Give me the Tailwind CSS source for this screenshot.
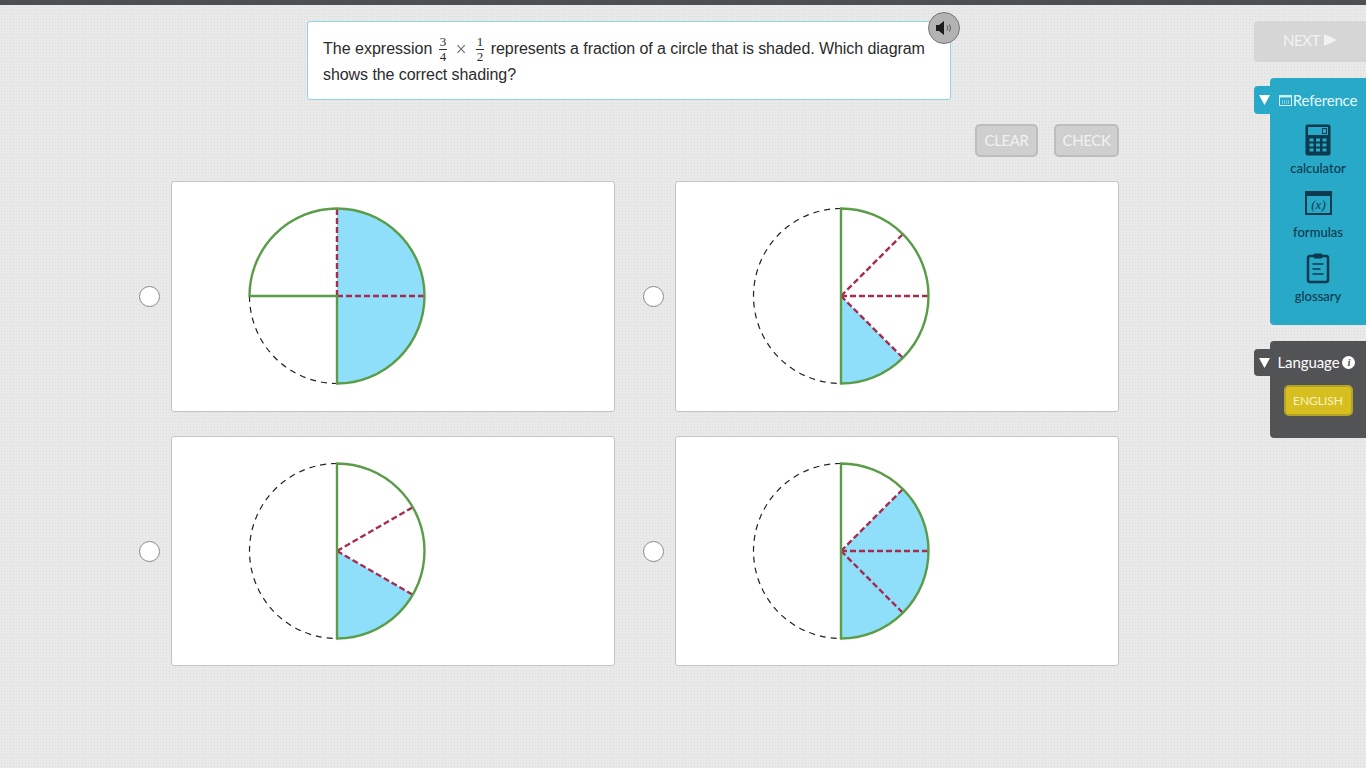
<!DOCTYPE html>
<html lang="en">
<head>
<meta charset="utf-8">
<title>Fractions item</title>
<script src="https://cdn.jsdelivr.net/npm/@tailwindcss/browser@4"></script>
</head>
<body class="m-0 overflow-hidden">
<div class="w-[1366px] h-[768px] overflow-hidden font-['Liberation_Sans',sans-serif] bg-[#e9e9e9] bg-[radial-gradient(#dcdcdc_0.6px,transparent_0.8px)] bg-[length:3px_3px]">
  <div class="h-[5px] bg-[#4c5050]"></div>
  <div class="flex">
    <!-- main column -->
    <main class="w-[1254px] pl-[139px] shrink-0">
      <div class="w-[980px]">
        <div class="relative ml-[168px] mt-[16px] w-[644px] h-[79px] bg-white border border-[#8ed6e0] rounded-[3px] px-[15px] pt-[14px] text-[16px] leading-[26px] text-[#2b2b2b]">
          <span>The expression</span>
          <span class="inline-flex flex-col items-center align-middle ml-[2px] font-['Liberation_Serif',serif] text-[13px] leading-[14px] -my-[6px]"><span class="px-[1px] border-b border-[#333]">3</span><span class="px-[1px]">4</span></span>
          <span class="font-['DejaVu_Sans',sans-serif] text-[15px] leading-[20px] mx-[3px] font-light text-[#444]">×</span>
          <span class="inline-flex flex-col items-center align-middle ml-[1px] mr-[2px] font-['Liberation_Serif',serif] text-[13px] leading-[14px] -my-[6px]"><span class="px-[1px] border-b border-[#333]">1</span><span class="px-[1px]">2</span></span>
          <span class="tracking-[-0.07px]">represents a fraction of a circle that is shaded. Which diagram shows the correct shading?</span>
          <div class="absolute left-[620px] -top-[10px] w-[32px] h-[32px] rounded-full bg-[#b3b3b3] border border-[#777] flex items-center justify-center">
            <svg width="20" height="16" viewBox="0 0 20 16"><path d="M2 5h3l5-4v14l-5-4H2z" fill="#1c1c1c"/><path d="M13 5.500q1.500 2.500 0 5M15.500 4.500q2 3.500 0 7" fill="none" stroke="#555" stroke-width="1"/></svg>
          </div>
        </div>
        <div class="flex justify-end gap-[16px] mt-[24px] font-['Lato',sans-serif] text-[15px] tracking-[-0.4px] text-[#f2f2f2]">
          <button class="w-[63px] h-[33px] bg-[#cfcfcf] border-2 border-[#bdbdbd] rounded-[5px] flex items-center justify-center">CLEAR</button>
          <button class="w-[65px] h-[33px] bg-[#cfcfcf] border-2 border-[#bdbdbd] rounded-[5px] flex items-center justify-center">CHECK</button>
        </div>
        <div class="grid grid-cols-[476px_444px] gap-x-[60px] gap-y-[24px] mt-[24px]">
          <!-- A -->
          <div class="flex items-center">
            <span class="w-[21px] h-[21px] rounded-full bg-white border border-[#8a8a8a] shrink-0"></span>
            <div class="ml-[11px] w-[444px] h-[231px] bg-white border border-[#c4c4c4] rounded-[3px] flex items-center pl-[65px] pb-[2px]">
              <svg width="200" height="200" viewBox="-100 -100 200 200">
                <path d="M0 -87.500A87.500 87.500 0 0 1 0 87.500Z" fill="#8fdffa"/>
                <path d="M-87.500 0A87.500 87.500 0 0 0 0 87.500" fill="none" stroke="#222" stroke-width="1.200" stroke-dasharray="6 5"/>
                <path d="M0 0V-87.500M0 0H87.500" stroke="#a82a4c" stroke-width="2.400" stroke-dasharray="6 3" fill="none"/>
                <path d="M0 87.500V0H-87.500A87.500 87.500 0 0 1 87.500 0A87.500 87.500 0 0 1 0 87.500Z" fill="none" stroke="#5a9c48" stroke-width="2.400"/>
              </svg>
            </div>
          </div>
          <!-- B -->
          <div class="flex items-center -ml-[32px]">
            <span class="w-[21px] h-[21px] rounded-full bg-white border border-[#8a8a8a] shrink-0"></span>
            <div class="ml-[11px] w-[444px] h-[231px] bg-white border border-[#c4c4c4] rounded-[3px] flex items-center pl-[65px] pb-[2px]">
              <svg width="200" height="200" viewBox="-100 -100 200 200">
                <path d="M0 0L61.900 61.900A87.500 87.500 0 0 1 0 87.500Z" fill="#8fdffa"/>
                <path d="M0 -87.500A87.500 87.500 0 0 0 0 87.500" fill="none" stroke="#222" stroke-width="1.200" stroke-dasharray="6 5"/>
                <path d="M0 0L61.900 -61.900M0 0H87.500M0 0L61.900 61.900" stroke="#a82a4c" stroke-width="2.400" stroke-dasharray="6 3" fill="none"/>
                <path d="M0 87.500V-87.500A87.500 87.500 0 0 1 0 87.500Z" fill="none" stroke="#5a9c48" stroke-width="2.400"/>
              </svg>
            </div>
          </div>
          <!-- C -->
          <div class="flex items-center">
            <span class="w-[21px] h-[21px] rounded-full bg-white border border-[#8a8a8a] shrink-0"></span>
            <div class="ml-[11px] w-[444px] h-[230px] bg-white border border-[#c4c4c4] rounded-[3px] flex items-center pl-[65px]">
              <svg width="200" height="200" viewBox="-100 -100 200 200">
                <path d="M0 0L75.800 43.750A87.500 87.500 0 0 1 0 87.500Z" fill="#8fdffa"/>
                <path d="M0 -87.500A87.500 87.500 0 0 0 0 87.500" fill="none" stroke="#222" stroke-width="1.200" stroke-dasharray="6 5"/>
                <path d="M0 0L75.800 -43.750M0 0L75.800 43.750" stroke="#a82a4c" stroke-width="2.400" stroke-dasharray="6 3" fill="none"/>
                <path d="M0 87.500V-87.500A87.500 87.500 0 0 1 0 87.500Z" fill="none" stroke="#5a9c48" stroke-width="2.400"/>
              </svg>
            </div>
          </div>
          <!-- D -->
          <div class="flex items-center -ml-[32px]">
            <span class="w-[21px] h-[21px] rounded-full bg-white border border-[#8a8a8a] shrink-0"></span>
            <div class="ml-[11px] w-[444px] h-[230px] bg-white border border-[#c4c4c4] rounded-[3px] flex items-center pl-[65px]">
              <svg width="200" height="200" viewBox="-100 -100 200 200">
                <path d="M0 0L61.900 -61.900A87.500 87.500 0 0 1 0 87.500Z" fill="#8fdffa"/>
                <path d="M0 -87.500A87.500 87.500 0 0 0 0 87.500" fill="none" stroke="#222" stroke-width="1.200" stroke-dasharray="6 5"/>
                <path d="M0 0L61.900 -61.900M0 0H87.500M0 0L61.900 61.900" stroke="#a82a4c" stroke-width="2.400" stroke-dasharray="6 3" fill="none"/>
                <path d="M0 87.500V-87.500A87.500 87.500 0 0 1 0 87.500Z" fill="none" stroke="#5a9c48" stroke-width="2.400"/>
              </svg>
            </div>
          </div>
        </div>
      </div>
    </main>
    <!-- sidebar -->
    <aside class="w-[112px] shrink-0 pt-[16px] font-['Lato',sans-serif]">
      <button class="w-[112px] h-[41px] bg-[#d6d6d6] rounded-l-[4px] flex items-center justify-center gap-[4px] text-[15px] tracking-[-0.4px] text-[#f2f2f2] pb-[3px]">NEXT <svg width="13" height="12" viewBox="0 0 13 12"><path d="M0 0L13 6L0 12Z" fill="#f2f2f2"/></svg></button>
      <div class="flex mt-[16px]">
        <div class="w-[16px] h-[28px] mt-[8px] bg-[#27a9c7] rounded-l-[4px] flex items-center justify-center pl-[5px] shrink-0">
          <svg width="11" height="10" viewBox="0 0 11 10" class="shrink-0"><path d="M0 0H11L5.500 10Z" fill="#fff"/></svg>
        </div>
        <div class="w-[96px] h-[247px] bg-[#27a9c7] rounded-l-[4px] flex flex-col items-center pt-[12px] text-[#0e3a4f] text-[13px] leading-[16px] font-medium">
          <div class="flex items-center text-[15px] leading-[20px] text-[#e6f7fb] gap-[1px] font-normal tracking-[-0.2px]">
            <svg width="13" height="11" viewBox="0 0 13 11"><rect x="0.500" y="0.500" width="12" height="10" fill="none" stroke="#cfeff6"/><rect x="0.500" y="0.500" width="12" height="2" fill="#cfeff6"/><path d="M3 6h7M3 8h7" stroke="#cfeff6" stroke-dasharray="1 1"/></svg>
            <span>Reference</span>
          </div>
          <svg class="mt-[14px] shrink-0" width="26" height="32" viewBox="0 0 26 32"><rect x="0.500" y="0.500" width="25" height="31" rx="2" fill="#0e3a4f"/><rect x="3" y="3" width="20" height="8" fill="#27a9c7"/><rect x="17.500" y="4.500" width="4" height="5" fill="none" stroke="#0e3a4f"/><g fill="#27a9c7"><rect x="4.500" y="14.500" width="4" height="3"/><rect x="11" y="14.500" width="4" height="3"/><rect x="17.500" y="14.500" width="4" height="3"/><rect x="4.500" y="19.500" width="4" height="3"/><rect x="11" y="19.500" width="4" height="3"/><rect x="17.500" y="19.500" width="4" height="3"/><rect x="4.500" y="24.500" width="4" height="3"/><rect x="11" y="24.500" width="4" height="3"/><rect x="17.500" y="24.500" width="4" height="3"/></g></svg>
          <span class="mt-[4px]">calculator</span>
          <svg class="mt-[15px] shrink-0" width="27" height="24" viewBox="0 0 27 24"><rect x="1" y="1" width="25" height="22" fill="none" stroke="#0e3a4f" stroke-width="2"/><rect x="1" y="1" width="25" height="4" fill="#0e3a4f"/><text x="13.500" y="18" text-anchor="middle" font-family="Liberation Serif" font-style="italic" font-size="13" fill="#0e3a4f">(x)</text></svg>
          <span class="mt-[9px]">formulas</span>
          <svg class="mt-[12px] shrink-0" width="24" height="32" viewBox="0 0 24 32"><rect x="2" y="4" width="20" height="26" rx="2" fill="none" stroke="#0e3a4f" stroke-width="2.500"/><rect x="7.500" y="1.500" width="9" height="5" rx="1.500" fill="#0e3a4f"/><path d="M6.500 12h11M6.500 17h8M6.500 22h11" stroke="#0e3a4f" stroke-width="1.500"/></svg>
          <span class="mt-[4px]">glossary</span>
        </div>
      </div>
      <div class="flex mt-[16px]">
        <div class="w-[16px] h-[27px] mt-[8px] bg-[#525354] rounded-l-[4px] flex items-center justify-center pl-[5px] shrink-0">
          <svg width="11" height="10" viewBox="0 0 11 10" class="shrink-0"><path d="M0 0H11L5.500 10Z" fill="#fff"/></svg>
        </div>
        <div class="w-[96px] h-[97px] bg-[#525354] rounded-l-[4px] flex flex-col items-center pt-[11px]">
          <div class="flex items-center gap-[3px] text-[15px] leading-[20px] text-white -ml-[3px] tracking-[-0.1px]">
            <span>Language</span>
            <span class="w-[13px] h-[13px] rounded-full bg-white text-[#525354] text-[11px] leading-[13px] italic font-bold text-center font-['Liberation_Serif',serif]">i</span>
          </div>
          <button class="mt-[13px] w-[69px] h-[31px] bg-[#d6bf1f] border-2 border-[#b5a326] rounded-[5px] text-[12px] text-[#f7f2c8] flex items-center justify-center">ENGLISH</button>
        </div>
      </div>
    </aside>
  </div>
</div>
</body>
</html>
